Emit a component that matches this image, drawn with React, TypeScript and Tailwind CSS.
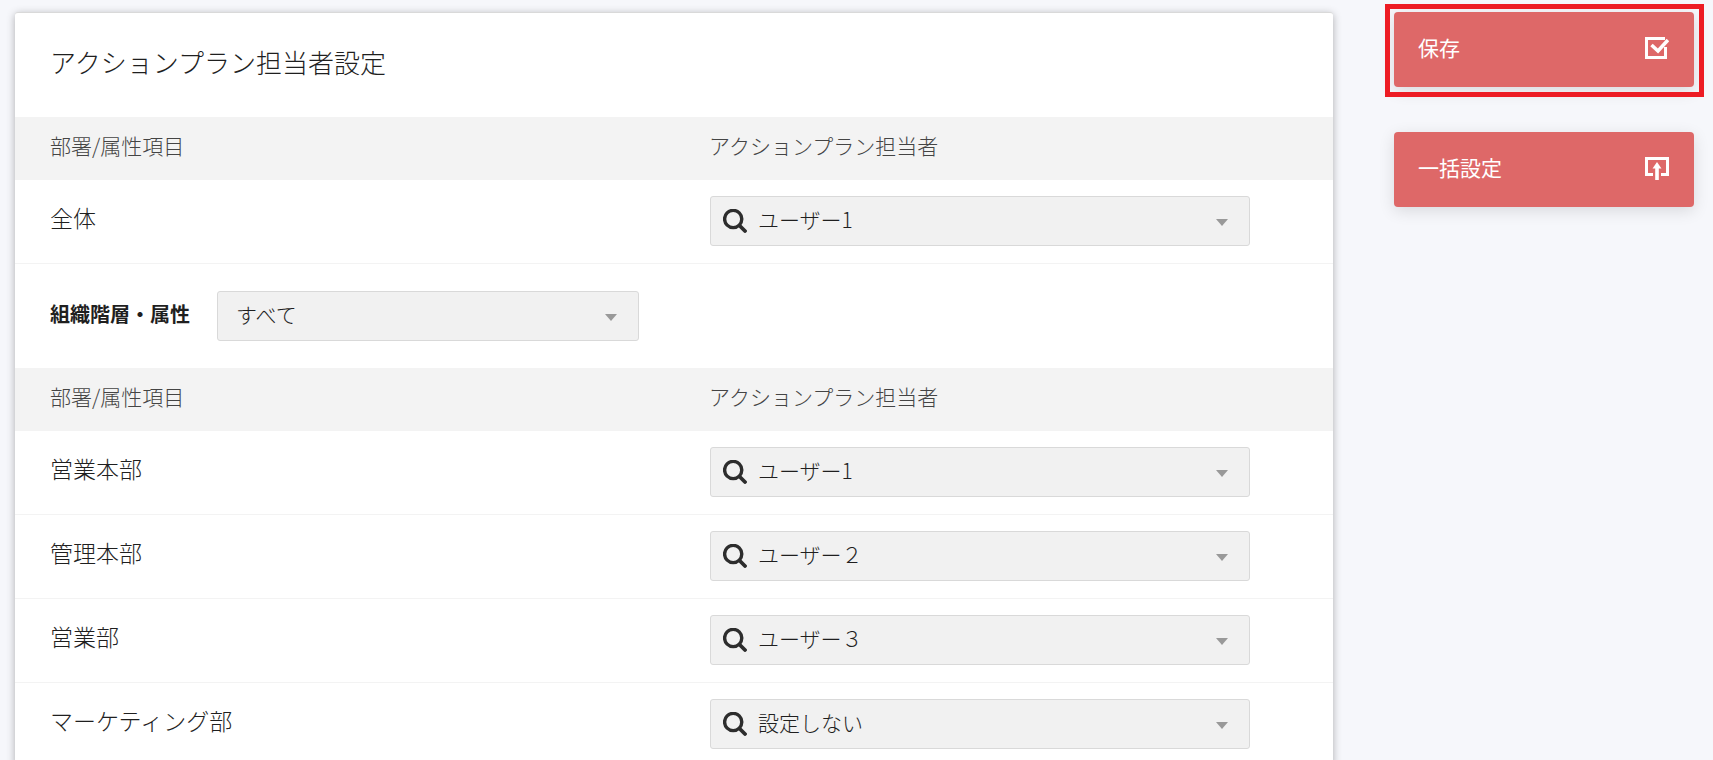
import React from 'react'

type Assignment = {
  department: string
  assignee: string
}

const overall: Assignment[] = [{ department: '全体', assignee: 'ユーザー1' }]

const departments: Assignment[] = [
  { department: '営業本部', assignee: 'ユーザー1' },
  { department: '管理本部', assignee: 'ユーザー２' },
  { department: '営業部', assignee: 'ユーザー３' },
  { department: 'マーケティング部', assignee: '設定しない' }
]

const assignees = ['ユーザー1', 'ユーザー２', 'ユーザー３', '設定しない']

function SearchIcon() {
  return (
    <svg
      className="pointer-events-none absolute left-[13px] top-[13px] size-6"
      viewBox="0 0 24 24"
      fill="none"
      stroke="#2d2d2d"
      aria-hidden="true"
    >
      <ellipse cx="10.2" cy="10" rx="8.6" ry="8.6" strokeWidth="3.4" />
      <path d="M16.5 16.5L22 22" strokeWidth="3.8" strokeLinecap="round" />
    </svg>
  )
}

function Caret() {
  return (
    <svg
      className="pointer-events-none absolute right-[22px] top-[23px] h-[7px] w-3"
      viewBox="0 0 12 7"
      fill="#999999"
      aria-hidden="true"
    >
      <path d="M0 0h12L6 7z" />
    </svg>
  )
}

function SaveIcon() {
  return (
    <svg className="size-6" viewBox="0 0 24 24" fill="none" stroke="#ffffff" strokeWidth="3" aria-hidden="true">
      <path d="M20 2.5H1.5v19h19V11" />
      <path d="M6.5 9L13 15L23 4" strokeWidth="3.6" />
    </svg>
  )
}

function UploadIcon() {
  return (
    <svg className="size-6" viewBox="0 0 24 24" fill="none" stroke="#ffffff" strokeWidth="3" aria-hidden="true">
      <path d="M8 18.5H1.5v-16h21v16H16" />
      <path d="M12 24V11" strokeWidth="3.6" />
      <path d="M12 6l4.5 6.5h-9z" fill="#ffffff" stroke="none" />
    </svg>
  )
}

function AssignmentTable({ rows }: { rows: Assignment[] }) {
  return (
    <table className="w-full table-fixed border-separate border-spacing-0 text-left">
      <thead>
        <tr className="h-[63px] bg-[#f3f3f3] text-[21px] text-[#444444]">
          <th className="px-[35px] pb-1.5 pt-0 font-light">部署/属性項目</th>
          <th className="px-[35px] pb-1.5 pt-0 font-light">アクションプラン担当者</th>
        </tr>
      </thead>
      <tbody>
        {rows.map((row) => (
          <tr key={row.department} className="h-[84px]">
            <td className="border-b border-[#f3f3f3] px-[35px] pb-2 pt-0 text-[23px]">{row.department}</td>
            <td className="border-b border-[#f3f3f3] px-9 pb-0.5 pt-0">
              <div className="relative max-w-[540px]">
                <SearchIcon />
                <select
                  aria-label={`${row.department}の担当者`}
                  defaultValue={row.assignee}
                  className="h-[50px] w-full appearance-none rounded-[3px] border border-[#d9d9d9] bg-[#f1f1f1] pb-0.5 pl-[47px] pr-10 text-[21px]"
                >
                  {assignees.map((name) => (
                    <option key={name}>{name}</option>
                  ))}
                </select>
                <Caret />
              </div>
            </td>
          </tr>
        ))}
      </tbody>
    </table>
  )
}

const buttonClass =
  'flex h-[75px] w-full items-center justify-between rounded bg-[#de6868] pb-[3px] pl-6 pr-[25px] text-[21px] font-normal text-white shadow-[0_4px_16px_rgba(0,0,0,0.12)]'

export default function App() {
  return (
    <div className="flex min-h-screen items-start gap-[61px] bg-[#f6f7fb] pl-[15px] pr-[19px] pt-3 font-['Noto_Sans_CJK_JP',sans-serif] font-light text-[#1f1f1f]">
      <main className="min-w-0 flex-1 rounded-[3px] border-t border-[#d9d9d9] bg-white shadow-[0_2px_8px_rgba(0,0,0,0.3)]">
        <h1 className="flex h-[104px] items-center px-[35px] pb-2 text-[26px]">アクションプラン担当者設定</h1>
        <AssignmentTable rows={overall} />
        <div className="flex h-[104px] items-center px-[35px]">
          <label htmlFor="hierarchy" className="w-[167px] pb-1 text-[20px] font-bold">
            組織階層・属性
          </label>
          <div className="relative w-[422px]">
            <select
              id="hierarchy"
              className="h-[50px] w-full appearance-none rounded-[3px] border border-[#d9d9d9] bg-[#f1f1f1] pb-0.5 pl-[18px] pr-10 text-[21px]"
            >
              <option>すべて</option>
            </select>
            <Caret />
          </div>
        </div>
        <AssignmentTable rows={departments} />
      </main>

      <aside className="flex w-[300px] shrink-0 flex-col gap-[45px]">
        <div className="relative">
          <button type="button" className={buttonClass}>
            保存
            <SaveIcon />
          </button>
          {/* highlight frame around the save button */}
          <div className="pointer-events-none absolute -bottom-[10px] -left-[9px] -right-[10px] -top-2 border-[5px] border-[#ed1c24]" />
        </div>
        <button type="button" className={buttonClass}>
          一括設定
          <UploadIcon />
        </button>
      </aside>
    </div>
  )
}
